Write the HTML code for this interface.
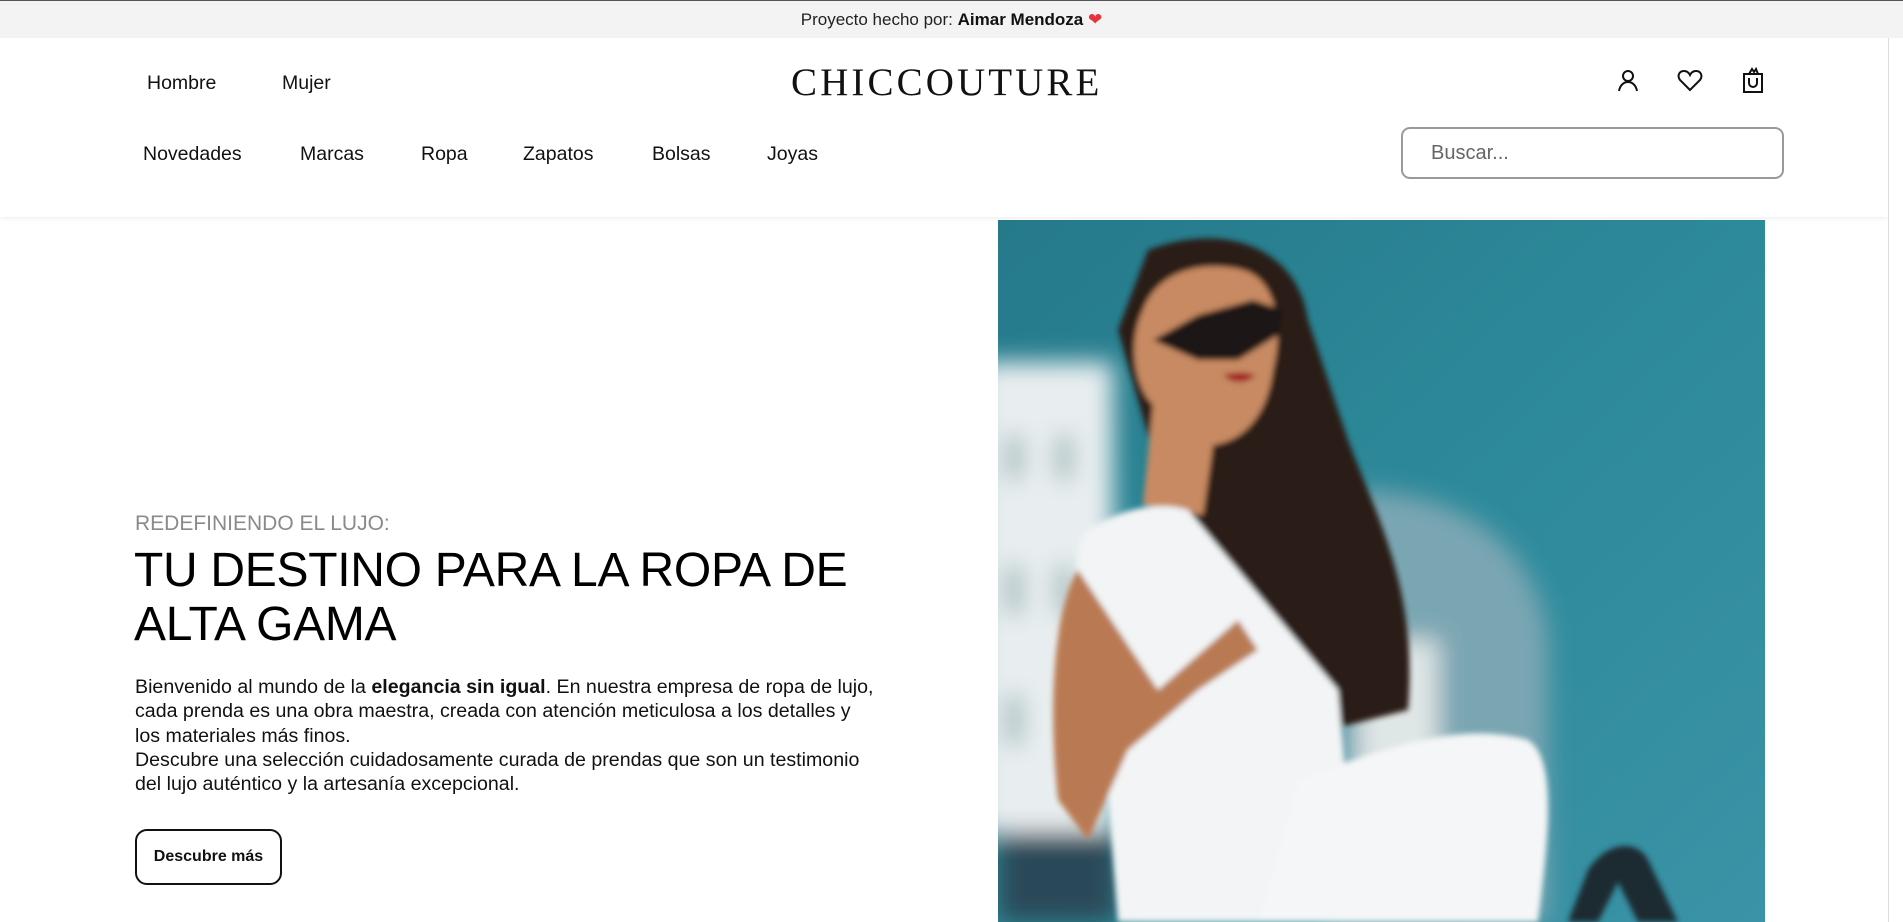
<!DOCTYPE html>
<html><head><meta charset="utf-8"><style>
*{margin:0;padding:0;box-sizing:border-box}
html,body{width:1903px;height:922px;overflow:hidden;background:#fff;font-family:"Liberation Sans",sans-serif;color:#111}
.top{position:absolute;left:0;top:0;width:1903px;height:38px;background:#f3f3f3;border-top:1px solid #555;text-align:center;font-size:17px;line-height:37px;color:#222}
.top b{font-weight:600;color:#111}
.hdr{position:absolute;left:0;top:38px;width:1888px;height:179px;background:#fff;box-shadow:0 2px 4px rgba(0,0,0,.06)}
.t{position:absolute;font-size:19.5px;color:#111;white-space:nowrap}
.logo{position:absolute;left:791px;top:63px;font-family:"Liberation Serif",serif;font-size:39px;letter-spacing:3.1px;color:#111;line-height:40px}
.search{position:absolute;left:1401px;top:127px;width:383px;height:52px;border:2px solid #999;border-radius:9px;font-size:20px;color:#666;padding-left:28px;line-height:48px}
.sb{position:absolute;left:1888px;top:38px;width:15px;height:884px;background:#fff;border-left:1px solid #ddd}
.sub{position:absolute;left:135px;top:512px;font-size:21px;color:#8a8a8a}
h1{position:absolute;left:134px;top:544px;font-size:48px;font-weight:400;line-height:54px;color:#000;width:800px;letter-spacing:-.3px}
.p{position:absolute;left:135px;top:675px;width:800px;font-size:19.6px;line-height:24.3px;color:#111;white-space:nowrap}
.p b{font-weight:600}
.btn{position:absolute;left:135px;top:829px;width:147px;height:56px;border:2px solid #111;border-radius:12px;font-size:16px;font-weight:600;text-align:center;line-height:52px}
.img{position:absolute;left:998px;top:220px;width:767px;height:702px;overflow:hidden}
</style></head><body>
<div class="top">Proyecto hecho por: <b>Aimar Mendoza</b> <span style="color:#e8313a">&#10084;</span></div>
<div class="hdr"></div>
<div class="t" style="left:147px;top:72px">Hombre</div>
<div class="t" style="left:282px;top:72px">Mujer</div>
<div class="logo">CHICCOUTURE</div>
<svg style="position:absolute;left:1617px;top:69px" width="22" height="24" viewBox="0 0 22 24" fill="none" stroke="#111" stroke-width="2"><circle cx="11" cy="7" r="5"/><path d="M2 22c1-6 5-9 9-9s8 3 9 9"/></svg>
<svg style="position:absolute;left:1677px;top:70px" width="26" height="22" viewBox="0 0 26 22" fill="none" stroke="#111" stroke-width="2"><path d="M13 20L3 10C0 6 2 1 7 1c3 0 5 2 6 4 1-2 3-4 6-4 5 0 7 5 4 9z"/></svg>
<svg style="position:absolute;left:1742px;top:67px" width="22" height="26" viewBox="0 0 22 26" fill="none" stroke="#111" stroke-width="2"><path d="M2 7h18v18H2z"/><path d="M7 7l3-5 2 3 2-3 2 5"/><path d="M7 11v5a4 4 0 0 0 8 0v-5"/></svg>
<div class="t" style="left:143px;top:143px">Novedades</div>
<div class="t" style="left:300px;top:143px">Marcas</div>
<div class="t" style="left:421px;top:143px">Ropa</div>
<div class="t" style="left:523px;top:143px">Zapatos</div>
<div class="t" style="left:652px;top:143px">Bolsas</div>
<div class="t" style="left:767px;top:143px">Joyas</div>
<div class="search">Buscar...</div>
<div class="sb"></div>
<div class="sub">REDEFINIENDO EL LUJO:</div>
<h1>TU DESTINO PARA LA ROPA DE ALTA GAMA</h1>
<div class="p">Bienvenido al mundo de la <b>elegancia sin igual</b>. En nuestra empresa de ropa de lujo,<br>cada prenda es una obra maestra, creada con atención meticulosa a los detalles y<br>los materiales más finos.<br>Descubre una selección cuidadosamente curada de prendas que son un testimonio<br>del lujo auténtico y la artesanía excepcional.</div>
<div class="btn">Descubre más</div>
<div class="img"><svg width="767" height="702" viewBox="0 0 767 702">
<defs>
<linearGradient id="sky" x1="0" y1="0" x2="1" y2="1"><stop offset="0" stop-color="#25798a"/><stop offset=".5" stop-color="#2d8a9a"/><stop offset="1" stop-color="#3a93a6"/></linearGradient>
<filter id="bl"><feGaussianBlur stdDeviation="12"/></filter>
<filter id="b2"><feGaussianBlur stdDeviation="3"/></filter>
</defs>
<rect width="767" height="702" fill="url(#sky)"/>
<g filter="url(#bl)">
<rect x="-20" y="142" width="135" height="470" fill="#e8eef0"/>
<rect x="10" y="215" width="12" height="45" fill="#6a9a98"/><rect x="60" y="215" width="12" height="45" fill="#6a9a98"/>
<rect x="10" y="345" width="12" height="50" fill="#6a9a98"/><rect x="60" y="345" width="12" height="50" fill="#6a9a98"/>
<rect x="10" y="475" width="12" height="50" fill="#6a9a98"/>
<path d="M350 270c120 0 190 60 200 150v282H330z" fill="#7aa6b2"/>
<rect x="360" y="420" width="80" height="250" fill="#dfe6e6"/>
<rect x="0" y="612" width="120" height="90" fill="#2b4a58"/>
</g>
<g filter="url(#b2)">
<path d="M150 30c80-30 150 0 160 70l40 120c30 80 70 150 60 270l-80 20-170-260-40-140z" fill="#2a1a16"/>
<path d="M145 90c15-40 60-50 100-40 35 10 40 60 30 100-5 40-25 70-60 75l-10 70-60-10 10-100c-20-20-25-65-10-95z" fill="#c78a62"/>
<path d="M155 120l45-25 55-15 30 10-5 25-40 25-40 0z" fill="#1a1414"/>
<path d="M225 155c10-3 25-3 32 0-6 8-22 10-32 0z" fill="#a0121a"/>
<path d="M90 310c30-20 70-30 100-20l150 180 20 232H120l-20-250c-20-60-30-120-10-142z" fill="#f2f4f5"/>
<path d="M80 350c-25 40-30 140-20 230l30 40 40-90 70-60 60-40-20-30-80 70z" fill="#b97a52"/>
<path d="M300 560c80-30 160-60 230-40 30 20 20 100 10 182H260z" fill="#f4f6f7"/>
<path d="M590 650c20-30 50-30 60-10l30 62h-40l-20-40-20 40h-30z" fill="#1b2a33"/>
</g>
</svg></div>
</body></html>
